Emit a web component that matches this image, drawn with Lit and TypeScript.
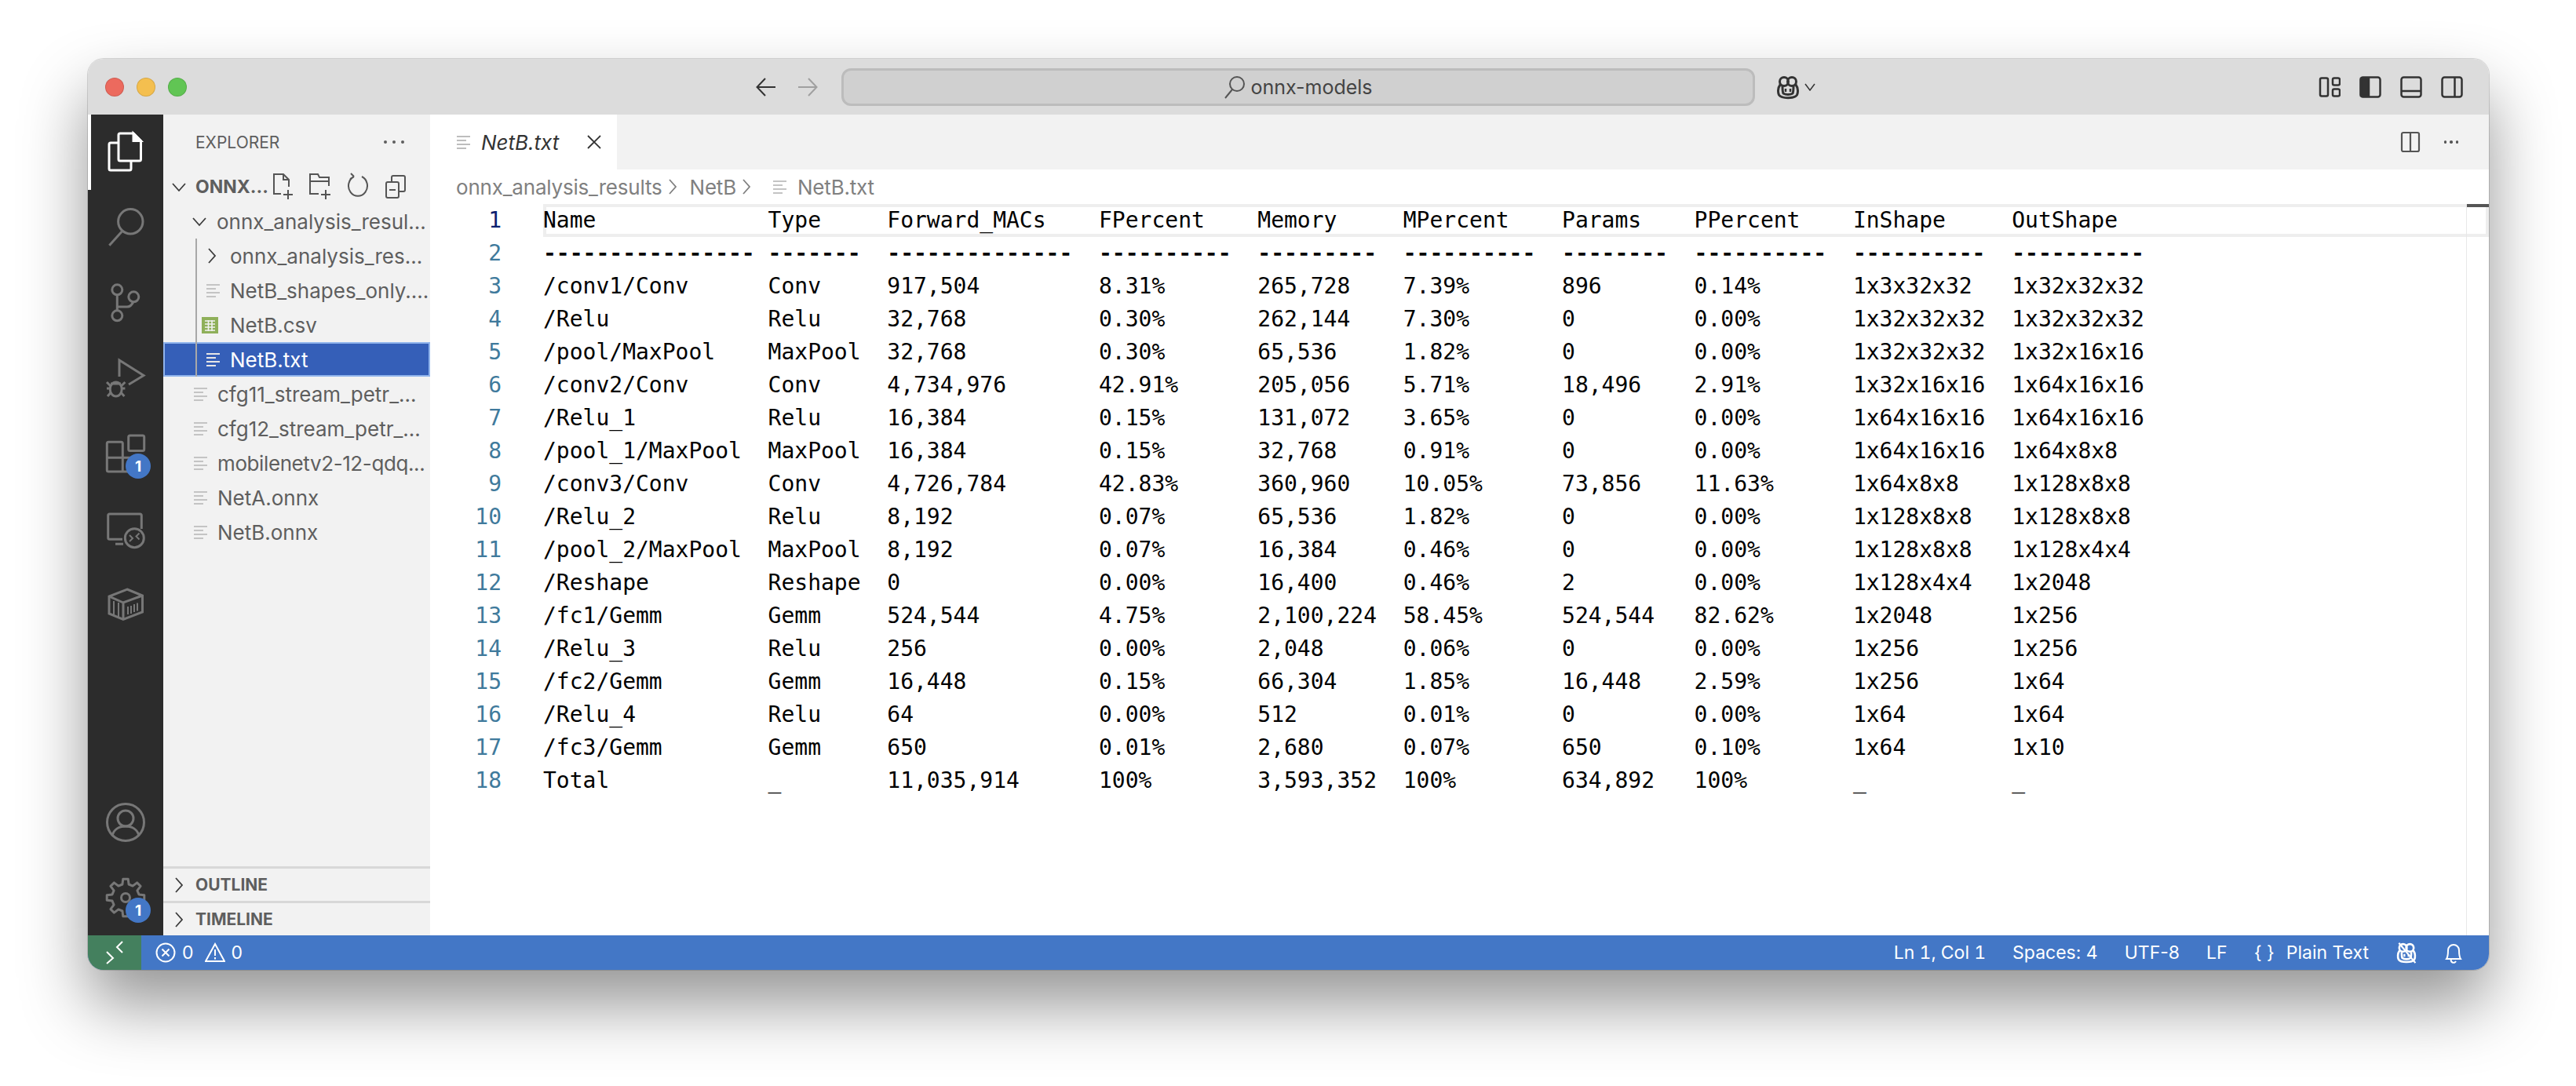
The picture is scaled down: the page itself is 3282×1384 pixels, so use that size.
import {LitElement, css, html, svg} from 'lit';
import {customElement} from 'lit/decorators.js';

const COLS = [17, 9, 16, 12, 11, 12, 10, 12, 12, 0];

const ROWS = [
  'Name|Type|Forward_MACs|FPercent|Memory|MPercent|Params|PPercent|InShape|OutShape',
  '----------------|-------|--------------|----------|---------|----------|--------|----------|----------|----------',
  '/conv1/Conv|Conv|917,504|8.31%|265,728|7.39%|896|0.14%|1x3x32x32|1x32x32x32',
  '/Relu|Relu|32,768|0.30%|262,144|7.30%|0|0.00%|1x32x32x32|1x32x32x32',
  '/pool/MaxPool|MaxPool|32,768|0.30%|65,536|1.82%|0|0.00%|1x32x32x32|1x32x16x16',
  '/conv2/Conv|Conv|4,734,976|42.91%|205,056|5.71%|18,496|2.91%|1x32x16x16|1x64x16x16',
  '/Relu_1|Relu|16,384|0.15%|131,072|3.65%|0|0.00%|1x64x16x16|1x64x16x16',
  '/pool_1/MaxPool|MaxPool|16,384|0.15%|32,768|0.91%|0|0.00%|1x64x16x16|1x64x8x8',
  '/conv3/Conv|Conv|4,726,784|42.83%|360,960|10.05%|73,856|11.63%|1x64x8x8|1x128x8x8',
  '/Relu_2|Relu|8,192|0.07%|65,536|1.82%|0|0.00%|1x128x8x8|1x128x8x8',
  '/pool_2/MaxPool|MaxPool|8,192|0.07%|16,384|0.46%|0|0.00%|1x128x8x8|1x128x4x4',
  '/Reshape|Reshape|0|0.00%|16,400|0.46%|2|0.00%|1x128x4x4|1x2048',
  '/fc1/Gemm|Gemm|524,544|4.75%|2,100,224|58.45%|524,544|82.62%|1x2048|1x256',
  '/Relu_3|Relu|256|0.00%|2,048|0.06%|0|0.00%|1x256|1x256',
  '/fc2/Gemm|Gemm|16,448|0.15%|66,304|1.85%|16,448|2.59%|1x256|1x64',
  '/Relu_4|Relu|64|0.00%|512|0.01%|0|0.00%|1x64|1x64',
  '/fc3/Gemm|Gemm|650|0.01%|2,680|0.07%|650|0.10%|1x64|1x10',
  'Total|_|11,035,914|100%|3,593,352|100%|634,892|100%|_|_',
];

const formatRow = (row: string) =>
  row.split('|').map((cell, i) => cell.padEnd(COLS[i])).join('');

type TreeRow = {label: string; indent: number; slot: number; icon: string; selected?: boolean; tight?: boolean};

const TREE: TreeRow[] = [
  {label: 'onnx_analysis_resul...', indent: 36, slot: 32, icon: 'down'},
  {label: 'onnx_analysis_res...', indent: 52, slot: 33, icon: 'right'},
  {label: 'NetB_shapes_only....', indent: 55, slot: 30, icon: 'file'},
  {label: 'NetB.csv', indent: 49, slot: 36, icon: 'csv'},
  {label: 'NetB.txt', indent: 55, slot: 30, icon: 'file', selected: true},
  {label: 'cfg11_stream_petr_...', indent: 39, slot: 30, icon: 'file'},
  {label: 'cfg12_stream_petr_...', indent: 39, slot: 30, icon: 'file'},
  {label: 'mobilenetv2-12-qdq...', indent: 39, slot: 30, icon: 'file', tight: true},
  {label: 'NetA.onnx', indent: 39, slot: 30, icon: 'file'},
  {label: 'NetB.onnx', indent: 39, slot: 30, icon: 'file'},
];

// builds the cog outline for the settings icon
function gearPath(cx: number, cy: number, outer: number, inner: number, teeth: number) {
  const pts: string[] = [];
  const step = (Math.PI * 2) / teeth;
  for (let i = 0; i < teeth; i++) {
    const a = i * step - Math.PI / 2;
    const corners: [number, number][] = [
      [inner, a - step * 0.3],
      [outer, a - step * 0.17],
      [outer, a + step * 0.17],
      [inner, a + step * 0.3],
    ];
    for (const [r, t] of corners) {
      pts.push(`${(cx + r * Math.cos(t)).toFixed(1)} ${(cy + r * Math.sin(t)).toFixed(1)}`);
    }
  }
  return 'M' + pts.join('L') + 'Z';
}

const fileIcon = html`<svg class="lines" width="17" height="18" viewBox="0 0 17 18"><path d="M0 2h17M0 7h12M0 12h17M0 17h12" stroke="currentColor" stroke-width="2"/></svg>`;
const chevronDown = html`<svg class="chev" width="20" height="20" viewBox="0 0 20 20"><path d="M2 6l8 9 8-9" fill="none" stroke="currentColor" stroke-width="1.8"/></svg>`;
const chevronRight = html`<svg class="chev" width="20" height="20" viewBox="0 0 20 20"><path d="M6 1l8 9-8 9" fill="none" stroke="currentColor" stroke-width="1.8"/></svg>`;
const csvIcon = html`<svg width="21" height="21" viewBox="0 0 21 21"><rect width="21" height="21" fill="#8fb05a"/><path d="M4 5h13M4 9h13M4 13h13M4 17h13M8.5 4v14M13 4v14" stroke="#f2f2f2" stroke-width="1.6"/></svg>`;

const copilot = (size: number, slash = false) => html`<svg width=${size} height=${size} viewBox="0 0 32 32" fill="none" stroke="currentColor" stroke-width="3">
  <circle cx="11" cy="9" r="5.5"/><circle cx="21" cy="9" r="5.5"/>
  <path d="M6 13C3 17 3 23 4.5 26C8 31 24 31 27.5 26C29 23 29 17 26 13"/>
  <path d="M9 15C9 19 9 22 10 24C13 26 19 26 22 24C23 22 23 19 23 15"/>
  <path d="M13 18v4M19 18v4" stroke-width="2.5"/>
  ${slash ? svg`<path d="M5 2l24 29" stroke-width="2.5"/>` : ''}
</svg>`;

@customElement('app-root')
export class AppRoot extends LitElement {
  static styles = css`
    :host {
      display: block;
      width: 3282px;
      height: 1384px;
      box-sizing: border-box;
      padding: 75px 111px 148px 112px;
      background: #fff;
      font-family: Inter, "Liberation Sans", sans-serif;
      overflow: hidden;
    }
    .window {
      height: 100%;
      display: flex;
      flex-direction: column;
      border-radius: 20px;
      overflow: hidden;
    }
    .frame {
      height: 100%;
      border-radius: 20px;
      box-shadow: 0 44px 84px rgba(0, 0, 0, 0.42), 0 0 0 1px rgba(0, 0, 0, 0.14);
    }
    svg { display: block; flex: none; }

    .titlebar {
      height: 71px;
      flex: none;
      background: #dcdcdc;
      display: flex;
      align-items: center;
      color: #333;
    }
    .lights { display: flex; gap: 16px; margin-left: 22px; width: 828px; }
    .light { width: 24px; height: 24px; border-radius: 50%; box-sizing: border-box; border: 1px solid rgba(0,0,0,.12); }
    .nav { display: flex; gap: 25px; }
    .searchbox {
      margin-left: 29px;
      width: 1164px;
      height: 48px;
      box-sizing: border-box;
      background: #d0d0d0;
      border: 3px solid #bcbcbc;
      border-radius: 12px;
      display: flex;
      align-items: center;
      justify-content: center;
      gap: 6px;
      font-size: 25px;
      color: #444;
    }
    .copilot { margin-left: 26px; display: flex; align-items: center; gap: 4px; }
    .layout { margin-left: auto; margin-right: 33px; display: flex; gap: 24px; }

    .body { flex: 1; display: flex; min-height: 0; }
    .activity {
      width: 96px;
      flex: none;
      background: #2c2c2c;
      display: flex;
      flex-direction: column;
      color: #777;
    }
    .act { width: 96px; height: 96px; position: relative; flex: none; }
    .act.active { color: #fff; }
    .act.active::before {
      content: "";
      position: absolute;
      left: 0;
      top: 0;
      bottom: 0;
      width: 4px;
      background: #fff;
    }
    .spacer { flex: 1; }
    .badge {
      position: absolute;
      left: 48px;
      top: 48px;
      width: 32px;
      height: 32px;
      border-radius: 50%;
      background: #4377c6;
      color: #fff;
      font-size: 19px;
      font-weight: 700;
      display: flex;
      align-items: center;
      justify-content: center;
    }

    .sidebar {
      width: 340px;
      flex: none;
      background: #f2f2f2;
      display: flex;
      flex-direction: column;
      color: #5e5e5e;
      font-size: 26px;
    }
    .sidehead {
      height: 70px;
      flex: none;
      display: flex;
      align-items: center;
      justify-content: space-between;
      padding: 0 33px 0 41px;
      font-size: 21px;
      box-sizing: border-box;
    }
    .dots { display: flex; gap: 7px; }
    .dots i { width: 4px; height: 4px; border-radius: 50%; background: currentColor; display: block; }
    .tree { position: relative; flex: 1; }
    .guide {
      position: absolute;
      left: 41px;
      top: 88px;
      height: 176px;
      width: 2px;
      background: #a8a8a8;
      z-index: 1;
    }
    .row {
      height: 44px;
      box-sizing: border-box;
      display: flex;
      align-items: center;
      white-space: nowrap;
      overflow: hidden;
    }
    .row.tight { letter-spacing: -0.4px; }
    .slot { display: flex; align-items: center; flex: none; }
    .chev { color: #3c3c3c; }
    .lines { color: #c4c4c4; }
    .row.selected {
      background: #355fb8;
      border: 2px solid #90b4ec;
      color: #fff;
    }
    .row.selected .lines { color: #e6e6e6; }
    .root { font-weight: 700; padding-left: 10px; font-size: 23px; }
    .root .actions { margin-left: auto; margin-right: 30px; display: flex; gap: 20px; color: #555; }
    .section {
      height: 44px;
      flex: none;
      box-sizing: border-box;
      border-top: 3px solid #d8d8d8;
      display: flex;
      align-items: center;
      padding-left: 10px;
      gap: 11px;
      font-size: 21px;
      font-weight: 700;
    }

    .main { flex: 1; min-width: 0; display: flex; flex-direction: column; background: #fff; }
    .tabs {
      height: 70px;
      flex: none;
      background: #f2f2f2;
      display: flex;
      align-items: stretch;
    }
    .tab {
      width: 238px;
      box-sizing: border-box;
      background: #fff;
      display: flex;
      align-items: center;
      padding-left: 34px;
      font-size: 26px;
      font-style: italic;
      color: #333;
    }
    .tab .lines { color: #bdbdbd; margin-right: 14px; }
    .tab .close { margin-left: 36px; }
    .tabactions { margin-left: auto; margin-right: 39px; display: flex; align-items: center; gap: 30px; color: #555; }
    .tabactions .dots { gap: 4px; }
    .tabactions .dots i { width: 3.5px; height: 3.5px; }
    .crumbs {
      height: 44px;
      flex: none;
      display: flex;
      align-items: center;
      padding-left: 33px;
      font-size: 26px;
      letter-spacing: -0.2px;
      color: #808080;
    }
    .crumbs .lines { margin: 0 14px 0 12px; }
    .crumbs .chev { color: #808080; margin: 0 12px 0 3px; }
    .editor { flex: 1; position: relative; min-height: 0; display: flex; }
    .gutter { width: 91px; flex: none; text-align: right; color: #3f7a9c; }
    .gutter div.on { color: #0b216f; }
    .code { margin-left: 53px; flex: 1; color: #000; white-space: pre; }
    .gutter, .code {
      font-family: "DejaVu Sans Mono", monospace;
      font-size: 28px;
      line-height: 42px;
    }
    .line { height: 42px; }
    .line.current { box-shadow: inset 0 0 0 4px #eeeeee; }
    .line.rule { -webkit-text-stroke: 1.5px #000; }
    .ruler {
      position: absolute;
      right: 28px;
      top: 0;
      bottom: 0;
      width: 1px;
      background: #e8e8e8;
    }
    .marker {
      position: absolute;
      right: 0;
      top: 0;
      width: 28px;
      height: 4px;
      background: #555;
    }

    .status {
      height: 44px;
      flex: none;
      background: #4377c6;
      color: #fff;
      display: flex;
      align-items: center;
      font-size: 23px;
    }
    .remote {
      width: 68px;
      height: 100%;
      background: #44805e;
      display: flex;
      align-items: center;
      justify-content: center;
    }
    .problems { display: flex; align-items: center; gap: 8px; margin-left: 18px; }
    .problems span { margin-right: 6px; }
    .statusright { margin-left: auto; margin-right: 33px; display: flex; align-items: center; gap: 34px; }
    .cursor { font-variant-numeric: tabular-nums; }
    .lang { display: flex; gap: 15px; }
  `;

  private act(icon: unknown, cls = '', badge = false) {
    return html`<div class="act ${cls}">
      <svg width="96" height="96" viewBox="0 0 96 96" fill="none" stroke="currentColor" stroke-width="3">${icon}</svg>
      ${badge ? html`<div class="badge">1</div>` : ''}
    </div>`;
  }

  private renderActivity() {
    return html`<div class="activity">
      ${this.act(svg`<path d="M39 26a2 2 0 0 1 2-2h17l9.5 9.5V57a2 2 0 0 1-2 2H41a2 2 0 0 1-2-2z"/>
        <path d="M58 24v9.5h9.5z" fill="currentColor"/>
        <path d="M39 36H29a2 2 0 0 0-2 2V69a2 2 0 0 0 2 2H53a2 2 0 0 0 2-2V59"/>`, 'active')}
      ${this.act(svg`<circle cx="54.3" cy="40.3" r="15.7"/><path d="M43.3 53L27.3 70.7"/>`)}
      ${this.act(svg`<circle cx="37.3" cy="31.3" r="6.5"/><circle cx="58.3" cy="40.3" r="6.5"/><circle cx="37.3" cy="64.3" r="6.5"/><path d="M37.3 38V58M37.3 53H50q5 0 8-6.5"/>`)}
      ${this.act(svg`<path d="M40 46V25L71 44.5L52 56"/>
        <ellipse cx="35.7" cy="62" rx="7.5" ry="9"/>
        <path d="M24 53l5 5M47.4 53l-5 5M24 61h4M47.4 61h-4M25 71l4.5-5M46.4 71l-4.5-5M29 55h13"/>`)}
      ${this.act(svg`<rect x="51.7" y="25" width="20" height="19.5" rx="2"/>
        <path d="M44.3 71H26.3a2 2 0 0 1-2-2V35.3a2 2 0 0 1 2-2H42.3a2 2 0 0 1 2 2V71zM24.3 53.3H56M44.3 71H54"/>`, '', true)}
      ${this.act(svg`<path d="M44 61.3H27.7a2 2 0 0 1-2-2V31a2 2 0 0 1 2-2H66.3a2 2 0 0 1 2 2V48M35 67.3H45"/>
        <circle cx="59.3" cy="59.7" r="12"/>
        <path d="M53 56l4 4-4 4M65.5 53.5l-4 4 4 4" stroke-width="2"/>`)}
      ${this.act(svg`<path d="M50 29L69.5 37V58L45 67.5L27 60V38Z"/><path d="M27 38L45 46L69.5 37M45 46V67.5"/>
        <path d="M51 51V61M55 50V60M59 48V58M63 46.5V56.5M33 44V61M39 46V64" stroke-width="2"/>`)}
      <div class="spacer"></div>
      ${this.act(svg`<circle cx="48" cy="48" r="23.5"/><circle cx="48" cy="43" r="10"/><path d="M31 65c2-8 9-12 17-12s15 4 17 12"/>`)}
      ${this.act(svg`<path d=${gearPath(48, 48, 24, 17.5, 8)} stroke-linejoin="round"/><circle cx="48" cy="48" r="5.5"/>`, '', true)}
    </div>`;
  }

  private renderSidebar() {
    return html`<div class="sidebar">
      <div class="sidehead"><span>EXPLORER</span><div class="dots"><i></i><i></i><i></i></div></div>
      <div class="tree">
        <div class="guide"></div>
        <div class="row root">
          <div class="slot" style="width:31px">${chevronDown}</div>
          <span>ONNX...</span>
          <div class="actions">
            <svg width="28" height="36" viewBox="0 0 28 36" fill="none" stroke="currentColor" stroke-width="2"><path d="M12 27H3V2h12l7 7v9M15 2v7h7M21 22v12M15 28h12"/></svg>
            <svg width="28" height="36" viewBox="0 0 28 36" fill="none" stroke="currentColor" stroke-width="2"><path d="M12 27H1V2h10l2 4h12v11M1 11h24M21 22v12M15 28h12"/></svg>
            <svg width="28" height="36" viewBox="0 0 28 36" fill="none" stroke="currentColor" stroke-width="2"><path d="M9 5a12 13 0 1 0 10 0M9 5L5 1M9 5L4 8"/></svg>
            <svg width="28" height="36" viewBox="0 0 28 36" fill="none" stroke="currentColor" stroke-width="2"><rect x="2" y="12" width="16" height="20" rx="2"/><path d="M9 12V6a2 2 0 0 1 2-2h13a2 2 0 0 1 2 2v16a2 2 0 0 1-2 2h-6M6 22h8"/></svg>
          </div>
        </div>
        ${TREE.map((row) => html`
          <div class="row ${row.selected ? 'selected' : ''} ${row.tight ? 'tight' : ''}" style="padding-left:${row.selected ? row.indent - 2 : row.indent}px">
            <div class="slot" style="width:${row.slot}px">
              ${row.icon === 'down' ? chevronDown : row.icon === 'right' ? chevronRight : row.icon === 'csv' ? csvIcon : fileIcon}
            </div>
            <span>${row.label}</span>
          </div>
        `)}
      </div>
      <div class="section">${chevronRight}<span>OUTLINE</span></div>
      <div class="section">${chevronRight}<span>TIMELINE</span></div>
    </div>`;
  }

  private renderMain() {
    return html`<div class="main">
      <div class="tabs">
        <div class="tab">
          ${fileIcon}<span>NetB.txt</span>
          <svg class="close" width="18" height="18" viewBox="0 0 18 18"><path d="M1 1l16 16M17 1L1 17" stroke="#333" stroke-width="1.8"/></svg>
        </div>
        <div class="tabactions">
          <svg width="26" height="28" viewBox="0 0 26 28" fill="none" stroke="currentColor" stroke-width="2.2"><rect x="2" y="2" width="22" height="24" rx="2"/><path d="M13 2v24"/></svg>
          <div class="dots"><i></i><i></i><i></i></div>
        </div>
      </div>
      <div class="crumbs">
        <span>onnx_analysis_results</span>${chevronRight}<span>NetB</span>${chevronRight}${fileIcon}<span>NetB.txt</span>
      </div>
      <div class="editor">
        <div class="gutter">${ROWS.map((_, i) => html`<div class=${i === 0 ? 'on' : ''}>${i + 1}</div>`)}</div>
        <div class="code">${ROWS.map((row, i) => html`<div class="line ${i === 0 ? 'current' : i === 1 ? 'rule' : ''}">${formatRow(row)}</div>`)}</div>
        <div class="ruler"></div>
        <div class="marker"></div>
      </div>
    </div>`;
  }

  private renderStatus() {
    return html`<div class="status">
      <div class="remote">
        <svg width="24" height="30" viewBox="0 0 24 30" fill="none" stroke="#fff" stroke-width="2"><path d="M2 14l8 8-8 7M22 1l-7 7 7 7"/></svg>
      </div>
      <div class="problems">
        <svg width="26" height="26" viewBox="0 0 26 26" fill="none" stroke="#fff" stroke-width="2"><circle cx="13" cy="13" r="11.5"/><path d="M8.5 8.5l9 9M17.5 8.5l-9 9"/></svg>
        <span>0</span>
        <svg width="26" height="26" viewBox="0 0 26 26" fill="none" stroke="#fff" stroke-width="2"><path d="M13 2L25 24H1zM13 9v8M13 19v2.5"/></svg>
        <span>0</span>
      </div>
      <div class="statusright">
        <span class="cursor">Ln 1, Col 1</span>
        <span>Spaces: 4</span>
        <span>UTF-8</span>
        <span>LF</span>
        <div class="lang"><span>{ }</span><span>Plain Text</span></div>
        ${copilot(28, true)}
        <svg width="24" height="30" viewBox="0 0 24 30" fill="none" stroke="#fff" stroke-width="2"><path d="M3 23c2-3 2-6 2-11a7 7 0 0 1 14 0c0 5 0 8 2 11zM9 23a3 3 0 0 0 6 3"/></svg>
      </div>
    </div>`;
  }

  render() {
    return html`<div class="frame"><div class="window">
      <div class="titlebar">
        <div class="lights">
          <div class="light" style="background:#ec6a5e"></div>
          <div class="light" style="background:#f4bf4f"></div>
          <div class="light" style="background:#61c554"></div>
        </div>
        <div class="nav">
          <svg width="28" height="28" viewBox="0 0 28 28" fill="none" stroke="#333" stroke-width="2"><path d="M26 14H3M13 3L2.5 14L13 25"/></svg>
          <svg width="28" height="28" viewBox="0 0 28 28" fill="none" stroke="#a0a0a0" stroke-width="2"><path d="M2 14h23M15 3l10.5 11L15 25"/></svg>
        </div>
        <div class="searchbox">
          <svg width="28" height="30" viewBox="0 0 28 30" fill="none" stroke="#555" stroke-width="2"><circle cx="17" cy="11" r="9"/><path d="M11 18L2 29"/></svg>
          <span>onnx-models</span>
        </div>
        <div class="copilot">
          ${copilot(32)}
          <svg width="16" height="12" viewBox="0 0 16 12" fill="none" stroke="#333" stroke-width="1.5"><path d="M2 2l6 8 6-8"/></svg>
        </div>
        <div class="layout">
          <svg width="28" height="28" viewBox="0 0 28 28" fill="none" stroke="#333" stroke-width="2.5"><rect x="2" y="2.5" width="10" height="23" rx="2"/><rect x="18" y="2.5" width="9" height="9" rx="2"/><rect x="18" y="16.5" width="9" height="9" rx="2"/></svg>
          <svg width="28" height="28" viewBox="0 0 28 28" fill="none" stroke="#333" stroke-width="2.5"><rect x="1.5" y="1.5" width="25" height="25" rx="3"/><path d="M2 3h10v22H2z" fill="#333"/></svg>
          <svg width="28" height="28" viewBox="0 0 28 28" fill="none" stroke="#333" stroke-width="2.5"><rect x="1.5" y="1.5" width="25" height="25" rx="3"/><path d="M2 19h24"/></svg>
          <svg width="28" height="28" viewBox="0 0 28 28" fill="none" stroke="#333" stroke-width="2.5"><rect x="1.5" y="1.5" width="25" height="25" rx="3"/><path d="M17.5 2v24"/></svg>
        </div>
      </div>
      <div class="body">
        ${this.renderActivity()}
        ${this.renderSidebar()}
        ${this.renderMain()}
      </div>
      ${this.renderStatus()}
    </div></div>`;
  }
}
